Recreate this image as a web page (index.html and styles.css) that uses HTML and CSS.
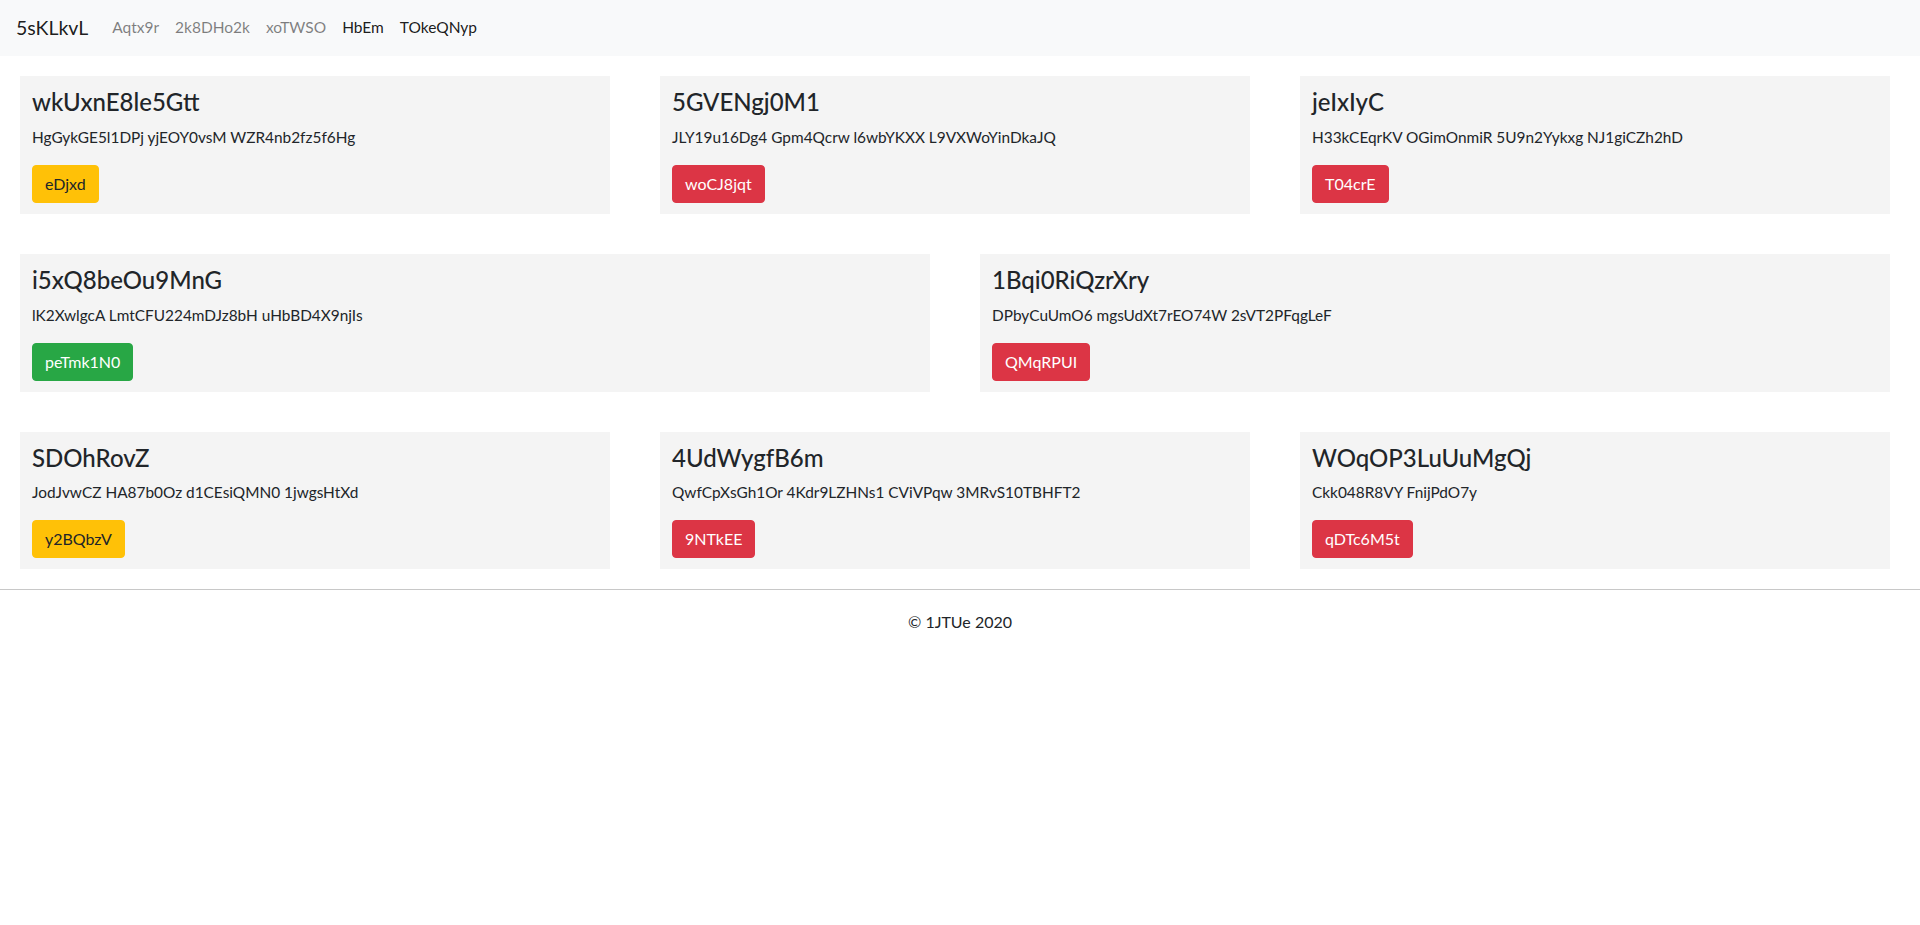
FILE: index.html
```html
<!DOCTYPE html>
<html lang="en">
<head>
<meta charset="utf-8">
<title>5sKLkvL</title>
<link rel="stylesheet" href="styles.css">
</head>
<body>
<nav class="navbar">
  <a class="brand" href="#">5sKLkvL</a>
  <ul class="nav">
    <li><a class="nav-link" href="#">Aqtx9r</a></li>
    <li><a class="nav-link" href="#">2k8DHo2k</a></li>
    <li><a class="nav-link" href="#">xoTWSO</a></li>
    <li><a class="nav-link active" href="#">HbEm</a></li>
    <li><a class="nav-link active" href="#">TOkeQNyp</a></li>
  </ul>
</nav>
<main class="main">
  <div class="row row-3">
    <div class="card">
      <h4 class="card-title">wkUxnE8le5Gtt</h4>
      <p class="card-text">HgGykGE5l1DPj yjEOY0vsM WZR4nb2fz5f6Hg</p>
      <a class="btn btn-warning" href="#">eDjxd</a>
    </div>
    <div class="card">
      <h4 class="card-title">5GVENgj0M1</h4>
      <p class="card-text">JLY19u16Dg4 Gpm4Qcrw l6wbYKXX L9VXWoYinDkaJQ</p>
      <a class="btn btn-danger" href="#">woCJ8jqt</a>
    </div>
    <div class="card">
      <h4 class="card-title">jeIxIyC</h4>
      <p class="card-text">H33kCEqrKV OGimOnmiR 5U9n2Yykxg NJ1giCZh2hD</p>
      <a class="btn btn-danger" href="#">T04crE</a>
    </div>
  </div>
  <div class="row row-2">
    <div class="card">
      <h4 class="card-title">i5xQ8beOu9MnG</h4>
      <p class="card-text">lK2XwlgcA LmtCFU224mDJz8bH uHbBD4X9njIs</p>
      <a class="btn btn-success" href="#">peTmk1N0</a>
    </div>
    <div class="card">
      <h4 class="card-title">1Bqi0RiQzrXry</h4>
      <p class="card-text">DPbyCuUmO6 mgsUdXt7rEO74W 2sVT2PFqgLeF</p>
      <a class="btn btn-danger" href="#">QMqRPUI</a>
    </div>
  </div>
  <div class="row row-3">
    <div class="card">
      <h4 class="card-title">SDOhRovZ</h4>
      <p class="card-text">JodJvwCZ HA87b0Oz d1CEsiQMN0 1jwgsHtXd</p>
      <a class="btn btn-warning" href="#">y2BQbzV</a>
    </div>
    <div class="card">
      <h4 class="card-title">4UdWygfB6m</h4>
      <p class="card-text">QwfCpXsGh1Or 4Kdr9LZHNs1 CViVPqw 3MRvS10TBHFT2</p>
      <a class="btn btn-danger" href="#">9NTkEE</a>
    </div>
    <div class="card">
      <h4 class="card-title">WOqOP3LuUuMgQj</h4>
      <p class="card-text">Ckk048R8VY FnijPdO7y</p>
      <a class="btn btn-danger" href="#">qDTc6M5t</a>
    </div>
  </div>
</main>
<hr class="divider">
<footer class="footer">© 1JTUe 2020</footer>
</body>
</html>
```

FILE: styles.css
```css
* { box-sizing: border-box; }
html, body { margin: 0; padding: 0; }
body {
  font-family: Lato, "Noto Sans", "Liberation Sans", sans-serif;
  font-size: 16px;
  line-height: 1.5;
  color: #212529;
  background: #fff;
}
a { text-decoration: none; }

.navbar {
  display: flex;
  align-items: center;
  height: 56px;
  padding: 8px 16px;
  background: #f8f9fa;
}
.brand {
  font-size: 19.5px;
  line-height: 30px;
  padding: 5px 0;
  margin-right: 16px;
  color: rgba(0,0,0,.9);
}
.nav {
  display: flex;
  list-style: none;
  margin: 0;
  padding: 0;
}
.nav-link {
  display: block;
  padding: 8px 8px;
  font-size: 15.5px;
  color: rgba(0,0,0,.5);
}
.nav-link.active { color: rgba(0,0,0,.9); }

.main {
  padding: 20px 30px 0 20px;
}
.row {
  display: grid;
  gap: 50px;
  margin-bottom: 40px;
}
.row:last-child { margin-bottom: 20px; }
.row-3 { grid-template-columns: repeat(3, 1fr); }
.row-2 { grid-template-columns: repeat(2, 1fr); }

.card {
  background: #f4f4f4;
  padding: 12px 12px 11px;
}
.card-title {
  margin: 0 0 8px;
  font-size: 24px;
  font-weight: 500;
  line-height: 1.2;
}
.card-text {
  margin: 0 0 16px;
  font-size: 15.4px;
  line-height: 24px;
}
.btn {
  display: inline-block;
  padding: 6px 12px;
  border: 1px solid transparent;
  border-radius: 4px;
  font-size: 16px;
  line-height: 24px;
}
.btn-warning { background: #ffc107; border-color: #ffc107; color: #212529; }
.btn-danger { background: #dc3545; border-color: #dc3545; color: #fff; }
.btn-success { background: #28a745; border-color: #28a745; color: #fff; }

.divider {
  margin: 0;
  border: 0;
  border-top: 1px solid #c8c8c8;
}
.footer {
  text-align: center;
  padding: 20px 0;
  font-size: 16px;
}
```
